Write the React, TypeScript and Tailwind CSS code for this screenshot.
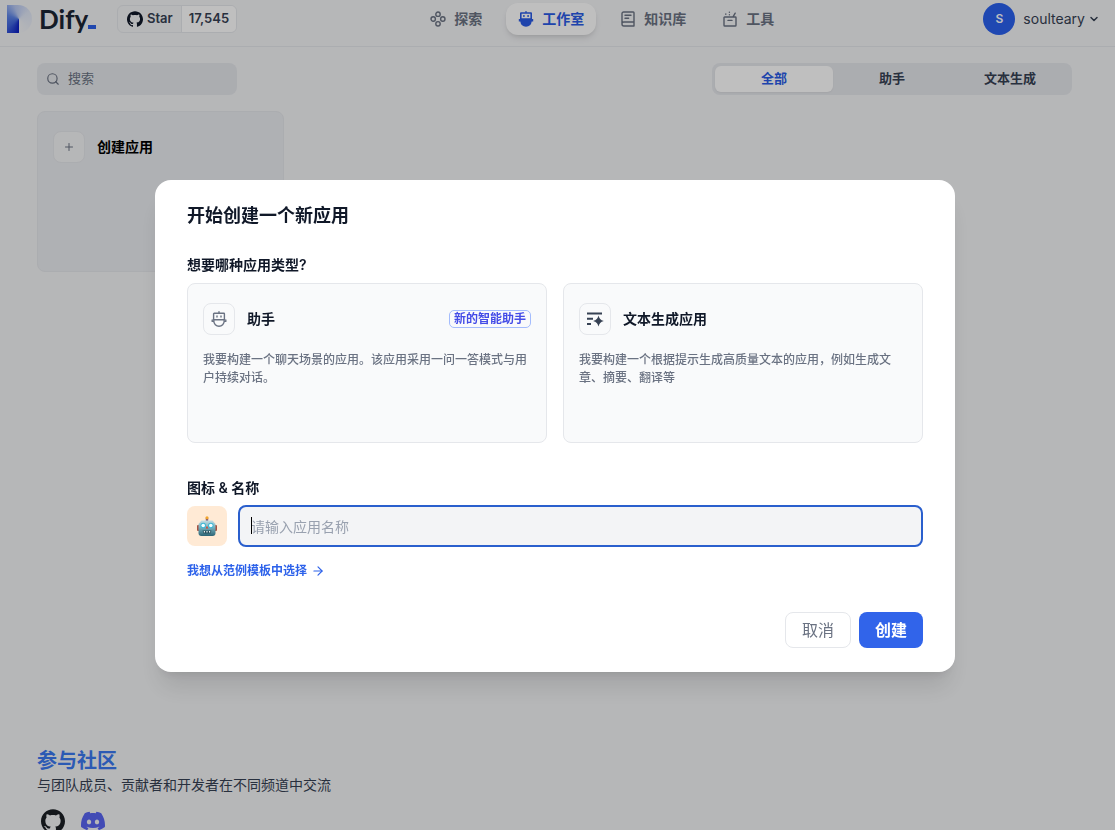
import { useState } from "react";
import { SiDiscord, SiGithub } from "react-icons/si";
import { ArrowRight, ChevronDown, Plus, Search } from "lucide-react";

type IconProps = { className?: string };

function ExploreIcon({ className }: IconProps) {
  return (
    <svg className={className} viewBox="0 0 16 16" fill="none" stroke="currentColor" strokeWidth="1.4">
      <circle cx="8" cy="3.2" r="2.2" />
      <circle cx="8" cy="12.8" r="2.2" />
      <circle cx="3.2" cy="8" r="2.2" />
      <circle cx="12.8" cy="8" r="2.2" />
    </svg>
  );
}

function RobotSolidIcon({ className }: IconProps) {
  return (
    <svg className={className} viewBox="0 0 16 16" fill="currentColor">
      <path
        fillRule="evenodd"
        d="M7.4 0h1.2v1.2H13a1 1 0 0 1 1 1V8H2V2.2a1 1 0 0 1 1-1h4.4zM3.6 2.8v4.4h8.8V2.8z"
      />
      <path d="M5.2 4h1.4v2H5.2zM9.4 4h1.4v2H9.4zM.8 8h14.4v2.6h-1.5A6 6 0 0 1 8 15.8a6 6 0 0 1-5.7-5.2H.8z" />
    </svg>
  );
}

function RobotIcon({ className }: IconProps) {
  return (
    <svg
      className={className}
      viewBox="0 0 16 16"
      fill="none"
      stroke="currentColor"
      strokeWidth="1.4"
      strokeLinecap="round"
      strokeLinejoin="round"
    >
      <path d="M8 .8v1.4M3.2 2.2h9.6a.6.6 0 0 1 .6.6v6H2.6v-6a.6.6 0 0 1 .6-.6zM6 5v1M10 5v1M2.8 8.800v1.200a5.200 5.200 0 0 0 10.400 0V8.800M1.200 9v1.400h1.600M14.800 9v1.400h-1.600" />
    </svg>
  );
}

function BookIcon({ className }: IconProps) {
  return (
    <svg
      className={className}
      viewBox="0 0 16 16"
      fill="none"
      stroke="currentColor"
      strokeWidth="1.4"
      strokeLinecap="round"
      strokeLinejoin="round"
    >
      <path d="M14 11V1.8a.8.8 0 0 0-.8-.8H3.6A1.6 1.6 0 0 0 2 2.6V13M14 11H3.8A1.8 1.8 0 0 0 2 13c0 1.1.8 2 1.8 2H14v-4M5 4.2h6M5 7.2h3.600" />
    </svg>
  );
}

function ToolsIcon({ className }: IconProps) {
  return (
    <svg
      className={className}
      viewBox="0 0 16 16"
      fill="none"
      stroke="currentColor"
      strokeWidth="1.4"
      strokeLinecap="round"
      strokeLinejoin="round"
    >
      <path d="M2.6 6h10.8a.6.6 0 0 1 .6.6v7.6a.8.8 0 0 1-.8.8H2.8a.8.8 0 0 1-.8-.8V6.6a.6.6 0 0 1 .6-.6zM6 9.4h4M3.8 3.2V3M7.4 1.3v-.2M7.4 3.8v-.1M11 5.8l2.2-3.600" />
    </svg>
  );
}

function TextGenIcon({ className }: IconProps) {
  return (
    <svg className={className} viewBox="0 0 18 18" fill="currentColor">
      <path d="M1 2.5h15v2H1zM1 7.8h6v2H1zM1 13h4v2H1z" />
      <path d="M12.5 5.5c.8 3.2 2 4.4 5.3 5.5-3.3 1.1-4.5 2.3-5.3 5.5-.8-3.2-2-4.4-5.3-5.5 3.3-1.1 4.5-2.3 5.3-5.5z" />
    </svg>
  );
}

function RobotFace() {
  return (
    <svg width="20" height="20" viewBox="0 0 20 20" aria-hidden="true">
      <defs>
        <linearGradient id="robot-face" x1="0" y1="0" x2="0" y2="1">
          <stop offset="0" stopColor="#c3dde2" />
          <stop offset="0.5" stopColor="#6faab8" />
          <stop offset="1" stopColor="#2c6475" />
        </linearGradient>
      </defs>
      <rect x="0" y="9" width="3" height="6" rx="1" fill="#a9503f" />
      <rect x="17" y="9" width="3" height="6" rx="1" fill="#a9503f" />
      <rect x="8.8" y="2" width="2.4" height="3" fill="#6b4a7c" />
      <circle cx="10" cy="1.8" r="1.6" fill="#f2a52e" />
      <path d="M4.5 4.500h11L18.500 8v9a3 3 0 0 1-3 3h-11a3 3 0 0 1-3-3V8z" fill="url(#robot-face)" />
      <circle cx="6.2" cy="9.5" r="2.7" fill="#39b6d6" />
      <circle cx="13.8" cy="9.5" r="2.7" fill="#39b6d6" />
      <circle cx="6.2" cy="9.5" r="1.8" fill="#f4ffff" />
      <circle cx="13.8" cy="9.5" r="1.8" fill="#f4ffff" />
      <path d="M10 9.8l1.3 2.6H8.7z" fill="#d8432f" />
      <path d="M5.5 14.5h9l-1 3h-7z" fill="#254e5c" />
      <path d="M6.8 15.8H8M9.4 15.8h1.2M12 15.8h1.2" stroke="#e8f1f2" strokeWidth="1.6" />
    </svg>
  );
}

const NAV_ITEMS = [
  { label: "探索", Icon: ExploreIcon, active: false },
  { label: "工作室", Icon: RobotSolidIcon, active: true },
  { label: "知识库", Icon: BookIcon, active: false },
  { label: "工具", Icon: ToolsIcon, active: false },
];

const TABS = ["全部", "助手", "文本生成"];

const APP_TYPES = [
  {
    title: "助手",
    badge: "新的智能助手",
    description: "我要构建一个聊天场景的应用。该应用采用一问一答模式与用户持续对话。",
    icon: <RobotIcon className="h-4 w-4 text-gray-500" />,
  },
  {
    title: "文本生成应用",
    badge: null,
    description: "我要构建一个根据提示生成高质量文本的应用，例如生成文章、摘要、翻译等",
    icon: <TextGenIcon className="h-[18px] w-[18px] text-gray-700" />,
  },
];

function Header() {
  return (
    <header className="flex h-[47px] shrink-0 items-start justify-between border-b border-gray-200 pr-[15px] pl-[7px]">
      <div className="flex items-start">
        <a href="#" className="flex h-[38px] w-[110px] items-center gap-[7px]" aria-label="Dify">
          <span className="h-7 w-[25px] rounded-r-full bg-[conic-gradient(from_180deg_at_12px_14px,#0a1cc4_0%,#3f63dd_15%,#5f86e8_30%,#b9c9f2_45%,#dfe6f6_65%,#f3f4f6_100%)]" />
          <span className="flex items-center font-['Lato'] text-[26px] leading-[38px] font-bold text-[#1b2634]">
            Dify
            <span className="mt-4 h-1 w-2 bg-[#2b5fe8]" />
          </span>
        </a>
        <a
          href="#"
          className="mt-[5px] flex h-7 items-center overflow-hidden rounded-md border border-gray-200 text-[13px] font-semibold text-gray-700"
        >
          <span className="flex h-full items-center gap-1 border-r border-gray-200 px-2 pl-[9px]">
            <SiGithub className="h-4 w-4 text-gray-900" />
            Star
          </span>
          <span className="flex h-full items-center bg-white px-[7px]">17,545</span>
        </a>
      </div>

      <nav className="flex items-center gap-3 pt-[3px]">
        {NAV_ITEMS.map(({ label, Icon, active }) => (
          <a
            key={label}
            href="#"
            className={`flex h-8 items-center gap-2 rounded-xl px-3 text-sm ${
              active
                ? "bg-white font-bold text-[#2a5be6] shadow-md"
                : "font-semibold text-gray-500"
            }`}
          >
            <Icon className="h-4 w-4" />
            {label}
          </a>
        ))}
      </nav>

      <button type="button" className="flex items-center gap-2 pt-[3px] pl-4 text-sm text-gray-700">
        <span className="flex h-8 w-8 items-center justify-center rounded-full bg-[#2a60ee] text-xs font-semibold text-white">
          S
        </span>
        <span className="flex items-center gap-[3px]">
          soulteary
          <ChevronDown className="h-3 w-3" strokeWidth={3} />
        </span>
      </button>
    </header>
  );
}

function CreateAppDialog() {
  const [name, setName] = useState("");

  return (
    <div className="fixed inset-0 flex items-start justify-center bg-black/25 pt-[180px] pr-[5px]">
      <div
        role="dialog"
        aria-modal="true"
        aria-labelledby="dialog-title"
        className="w-full max-w-[800px] rounded-2xl bg-white px-8 pt-5 pb-6 shadow-xl"
      >
        <h2 id="dialog-title" className="text-lg leading-8 font-semibold text-gray-900">
          开始创建一个新应用
        </h2>

        <h3 className="mt-[22px] text-sm leading-[21px] font-semibold text-gray-900">想要哪种应用类型?</h3>
        <div className="mt-2 grid grid-cols-2 gap-4">
          {APP_TYPES.map(({ title, badge, description, icon }) => (
            <button
              key={title}
              type="button"
              className="flex h-40 flex-col rounded-lg border border-gray-200 bg-gray-50 px-[15px] pt-[19px] text-left"
            >
              <span className="flex w-full items-center gap-3">
                <span className="flex h-8 w-8 items-center justify-center rounded-lg border border-gray-200">
                  {icon}
                </span>
                <span className="grow text-sm font-semibold text-gray-900">{title}</span>
                {badge && (
                  <span className="rounded-[5px] border border-[#a4bcfd] px-1 text-xs leading-4 font-semibold text-[#444ce7]">
                    {badge}
                  </span>
                )}
              </span>
              <span className="mt-4 text-xs leading-[18px] font-medium text-gray-500">{description}</span>
            </button>
          ))}
        </div>

        <label htmlFor="app-name" className="mt-[34px] block text-sm leading-[21px] font-semibold text-gray-900">
          图标 &amp; 名称
        </label>
        <div className="mt-[7px] flex items-center gap-[11px]">
          <button
            type="button"
            aria-label="应用图标"
            className="flex h-10 w-10 items-center justify-center rounded-lg bg-[#ffead5]"
          >
            <RobotFace />
          </button>
          <div className="relative grow">
            <input
              id="app-name"
              value={name}
              onChange={(e) => setName(e.target.value)}
              placeholder="请输入应用名称"
              className="block h-[42px] w-full rounded-lg border-2 border-[#2a5fcd] bg-gray-100 px-[11px] text-sm caret-transparent outline-none placeholder:text-gray-400"
            />
            {!name && <span className="absolute top-3 left-[13px] h-[17px] w-px bg-black" />}
          </div>
        </div>
        <a
          href="#"
          className="mt-[15px] flex w-fit items-center gap-1 text-xs leading-[18px] font-semibold text-[#2d62ea]"
        >
          我想从范例模板中选择
          <ArrowRight className="h-[14px] w-[14px]" />
        </a>

        <div className="mt-8 flex justify-end gap-2">
          <button
            type="button"
            className="h-9 rounded-lg border border-gray-200 px-4 text-base text-gray-500"
          >
            取消
          </button>
          <button type="button" className="h-9 rounded-lg bg-[#3164ea] px-4 text-base font-semibold text-white">
            创建
          </button>
        </div>
      </div>
    </div>
  );
}

export default function App() {
  const [tab, setTab] = useState(TABS[0]);

  return (
    <div className="flex h-screen flex-col overflow-hidden bg-gray-100 font-['Inter','Noto_Sans_CJK_SC',sans-serif]">
      <Header />

      <main className="min-h-0 grow pt-4 pr-[43px] pl-[37px]">
        <div className="flex items-center justify-between">
          <label className="flex h-8 w-[200px] items-center gap-2 rounded-lg bg-gray-200 px-[9px] text-gray-500">
            <Search className="h-[14px] w-[14px] shrink-0" />
            <input
              placeholder="搜索"
              aria-label="搜索"
              className="w-full min-w-0 text-[13px] outline-none placeholder:text-gray-500"
            />
          </label>
          <div className="grid h-8 w-[360px] grid-cols-3 rounded-lg bg-gray-200 p-[3px]">
            {TABS.map((item) => (
              <button
                key={item}
                type="button"
                onClick={() => setTab(item)}
                className={`rounded-md text-[13px] font-bold ${
                  item === tab ? "bg-white text-[#2a5be6] shadow-xs" : "text-gray-700"
                }`}
              >
                {item}
              </button>
            ))}
          </div>
        </div>

        <div className="mt-4 grid grid-cols-4 gap-4">
          <button
            type="button"
            className="flex h-[161px] items-start rounded-lg border border-gray-200 bg-[#eaecf0] px-[15px] pt-[19px]"
          >
            <span className="flex items-center gap-3">
              <span className="flex h-8 w-8 items-center justify-center rounded-lg border border-gray-200 bg-gray-100">
                <Plus className="h-3 w-3 text-gray-500" />
              </span>
              <span className="text-sm font-semibold text-black">创建应用</span>
            </span>
          </button>
        </div>
      </main>

      <footer className="h-[83px] shrink-0 px-[37px]">
        <h3 className="text-xl leading-7 font-bold text-[#3b78f0]">参与社区</h3>
        <p className="text-sm text-gray-700">与团队成员、贡献者和开发者在不同频道中交流</p>
        <div className="mt-[14px] flex items-center gap-4 px-1">
          <a href="#" aria-label="GitHub">
            <SiGithub className="h-6 w-6 text-[#1b1f24]" />
          </a>
          <a href="#" aria-label="Discord">
            <SiDiscord className="h-6 w-6 text-[#5865f2]" />
          </a>
        </div>
      </footer>

      <CreateAppDialog />
    </div>
  );
}
